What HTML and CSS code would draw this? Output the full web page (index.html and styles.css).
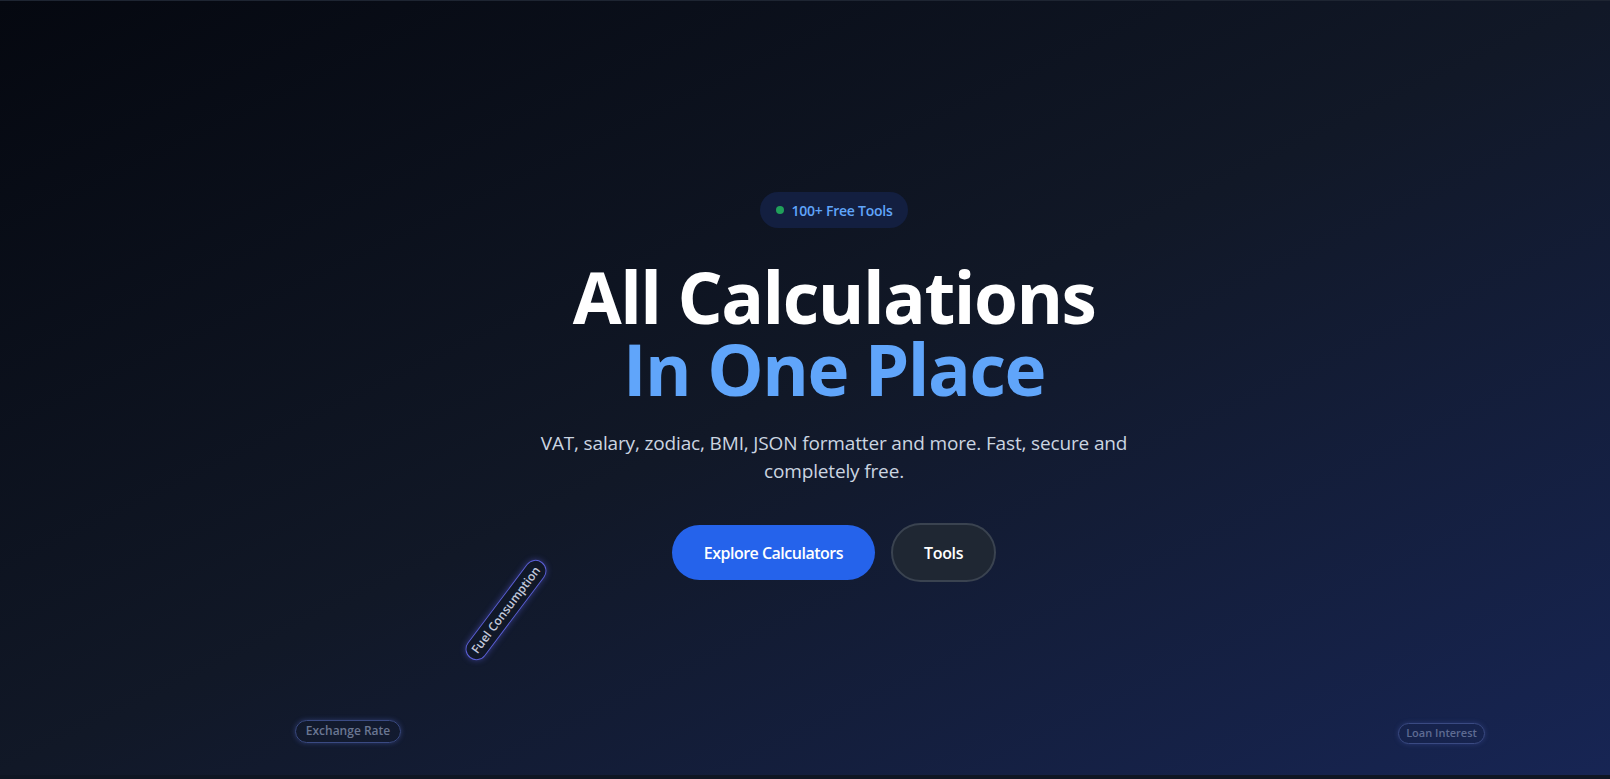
FILE: index.html
```html
<!DOCTYPE html>
<html lang="en">
<head>
<meta charset="utf-8">
<title>All Calculations In One Place</title>
<link rel="stylesheet" href="styles.css">
</head>
<body>
<section class="hero">
  <span class="float-tag tag-fuel">Fuel Consumption</span>
  <span class="float-tag tag-exchange">Exchange Rate</span>
  <span class="float-tag tag-loan">Loan Interest</span>
  <div class="hero-content">
    <div class="badge"><span class="badge-dot"></span><span>100+ Free Tools</span></div>
    <h1 class="title">All Calculations<br><span class="title-accent">In One Place</span></h1>
    <p class="subtitle">VAT, salary, zodiac, BMI, JSON formatter and more. Fast, secure and completely free.</p>
    <div class="actions">
      <a class="btn btn-primary" href="#">Explore Calculators</a>
      <a class="btn btn-secondary" href="#">Tools</a>
    </div>
  </div>
</section>
<div class="next-section"></div>
</body>
</html>
```

FILE: styles.css
```css
* { box-sizing: border-box; }
html, body { margin: 0; padding: 0; }
body {
  background: #0f1623;
  font-family: "Open Sans", "Noto Sans", "Liberation Sans", sans-serif;
  height: 779px;
  overflow: hidden;
}
.hero {
  position: relative;
  height: 775px;
  border-top: 1px solid #1e2532;
  background: linear-gradient(to bottom right, #050810 0%, #111827 50%, #172554 100%);
  display: flex;
  align-items: center;
  justify-content: center;
  padding-left: 58px;
  overflow: hidden;
}
.hero-content {
  display: flex;
  flex-direction: column;
  align-items: center;
  text-align: center;
  margin-top: -2px;
}
.badge {
  display: flex;
  align-items: center;
  gap: 8px;
  height: 36px;
  padding: 0 16px;
  border-radius: 999px;
  background: #131f40;
  color: #60a5fa;
  font-size: 14px;
  font-weight: 600;
  letter-spacing: -0.25px;
}
.badge-dot {
  width: 8px;
  height: 8px;
  border-radius: 50%;
  background: #20a05a;
}
.title {
  margin: 33px 0 0;
  font-size: 71px;
  line-height: 72px;
  font-weight: 700;
  color: #ffffff;
  letter-spacing: -1.5px;
}
.title-accent { color: #60a5fa; }
.subtitle {
  margin: 24px 0 0;
  max-width: 672px;
  font-size: 19px;
  line-height: 28px;
  color: #cbd5e1;
  letter-spacing: -0.15px;
}
.actions {
  margin-top: 38px;
  display: flex;
  align-items: center;
  gap: 16px;
}
.btn {
  display: inline-flex;
  align-items: center;
  justify-content: center;
  border-radius: 999px;
  font-size: 16px;
  font-weight: 600;
  line-height: 24px;
  color: #ffffff;
  text-decoration: none;
  letter-spacing: -0.3px;
}
.btn-primary {
  background: #2563eb;
  padding: 16px 32px;
  height: 55px;
  letter-spacing: -0.5px;
}
.btn-secondary {
  background: #1f2733;
  border: 2px solid #3a4350;
  padding: 0 31px;
  height: 59px;
}
.float-tag {
  position: absolute;
  display: inline-block;
  white-space: nowrap;
  border-radius: 999px;
  font-weight: 600;
}
.tag-fuel {
  left: 446px;
  top: 598px;
  width: 120px;
  text-align: center;
  padding: 3px 0;
  font-size: 12px;
  line-height: 14px;
  color: #c3c9dc;
  border: 1.5px solid #5b5fd6;
  box-shadow: 0 0 6px rgba(99, 102, 241, 0.45);
  background: rgba(17, 24, 39, 0.6);
  transform: rotate(-53deg);
}
.tag-exchange {
  left: 295px;
  top: 719px;
  width: 106px;
  height: 23px;
  text-align: center;
  font-size: 12px;
  line-height: 20px;
  color: #6a7692;
  border: 1.5px solid #3a4a82;
  box-shadow: 0 0 5px rgba(79, 100, 190, 0.45);
}
.tag-loan {
  left: 1398px;
  top: 722px;
  width: 87px;
  height: 21px;
  text-align: center;
  font-size: 11px;
  line-height: 18px;
  color: #5e6b92;
  border: 1.5px solid #3a4a82;
  box-shadow: 0 0 5px rgba(79, 100, 190, 0.35);
}
.next-section {
  height: 4px;
  background: #0f1623;
}
```
